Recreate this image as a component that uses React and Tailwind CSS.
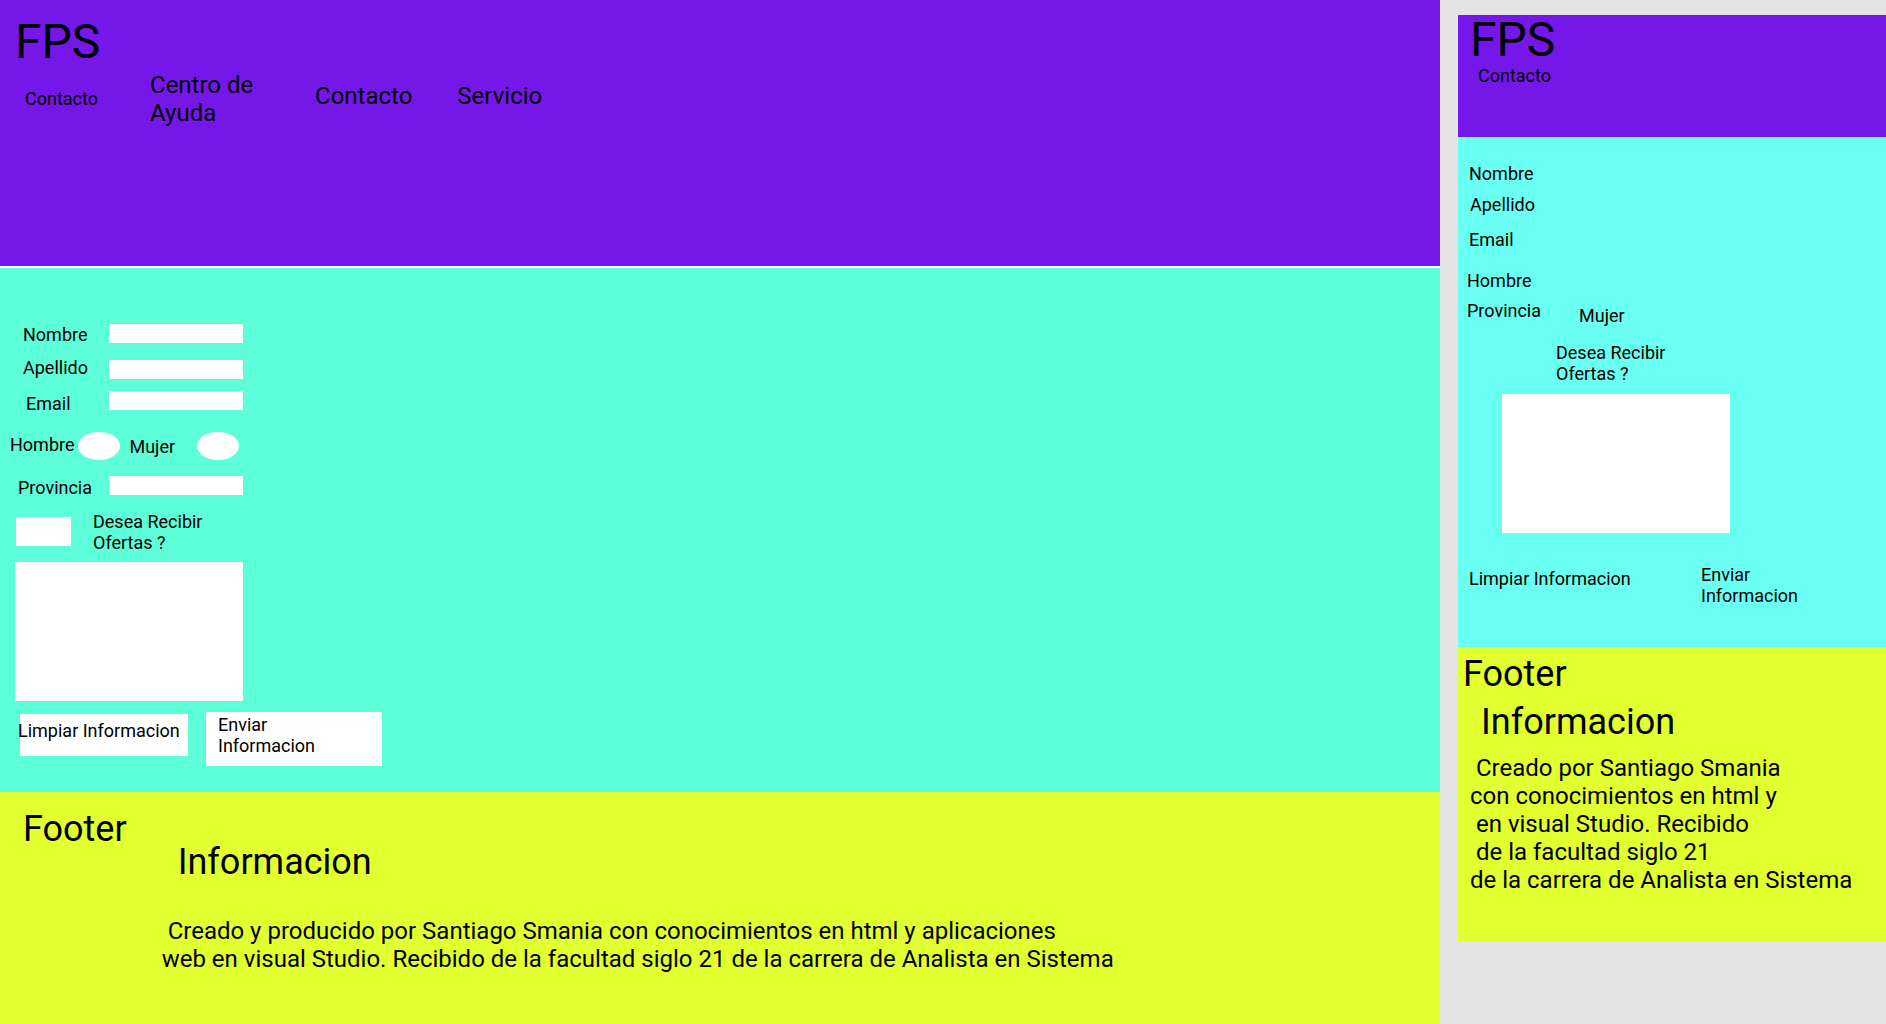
import React from "react";

const purple = "bg-[#7617ea]";

function DesktopView() {
  return (
    <div className="flex flex-col w-[1440px] h-[1024px] shrink-0">
      {/* Header */}
      <header className={`${purple} h-[268px] border-b-2 border-white`}>
        <h1 className="pt-[18px] pl-[15px] text-[48px] leading-none">FPS</h1>
        <nav className="mt-[5px] flex items-start pl-[25px]">
          <a className="mt-[17px] text-[18px] leading-[21px]">Contacto</a>
          <a className="ml-[52px] w-[120px] text-[24px] leading-[28px]">
            Centro de Ayuda
          </a>
          <a className="ml-[45px] mt-[11px] text-[24px] leading-[28px]">
            Contacto
          </a>
          <a className="ml-[45px] mt-[11px] text-[24px] leading-[28px]">
            Servicio
          </a>
        </nav>
      </header>

      {/* Form */}
      <section className="bg-[#5cffd8] h-[524px] pt-[56px] text-[18px] leading-[21px]">
        <div className="flex items-start pl-[23px]">
          <label className="w-[86px]">Nombre</label>
          <input className="w-[134px] h-[19px] bg-white" />
        </div>
        <div className="mt-[12px] flex items-start pl-[23px]">
          <label className="w-[86px]">Apellido</label>
          <input className="mt-[3px] w-[134px] h-[19px] bg-white" />
        </div>
        <div className="mt-[12px] flex items-start pl-[26px]">
          <label className="mt-[2px] w-[83px]">Email</label>
          <input className="w-[134px] h-[19px] bg-white" />
        </div>
        <div className="mt-[18px] flex items-start pl-[10px]">
          <span className="mt-[2px]">Hombre</span>
          <span className="ml-[4px] w-[42px] h-[28px] rounded-[50%] bg-white" />
          <span className="ml-[9px] mt-[4px]">Mujer</span>
          <span className="ml-[22px] w-[42px] h-[28px] rounded-[50%] bg-white" />
        </div>
        <div className="mt-[16px] flex items-start pl-[18px]">
          <label className="mt-[1px] w-[91px]">Provincia</label>
          <input className="w-[134px] h-[19px] bg-white" />
        </div>
        <div className="mt-[13px] flex items-start pl-[16px]">
          <span className="mt-[6px] w-[55px] h-[29px] bg-white" />
          <span className="ml-[22px]">
            Desea Recibir
            <br />
            Ofertas ?
          </span>
        </div>
        <textarea className="block mt-[9px] ml-[15px] w-[228px] h-[139px] bg-white resize-none" />
        <div className="mt-[11px] flex items-start pl-[20px]">
          <div className="mt-[2px] w-[168px] h-[42px] bg-white pt-[6px] whitespace-nowrap">
            <span className="-ml-[2px]">Limpiar Informacion</span>
          </div>
          <div className="ml-[18px] w-[176px] h-[54px] bg-white pl-[12px] pt-[2px]">
            Enviar
            <br />
            Informacion
          </div>
        </div>
      </section>

      {/* Footer */}
      <footer className="bg-[#e2ff2f] flex-1 flex items-start pt-[16px]">
        <h2 className="pl-[23px] text-[36px] leading-[42px]">Footer</h2>
        <div className="ml-[35px]">
          <h3 className="mt-[33px] pl-[16px] text-[36px] leading-[42px]">
            Informacion
          </h3>
          <div className="mt-[34px] text-[24px] leading-[28px] whitespace-pre">
            <p>{" Creado y producido por Santiago Smania con conocimientos en html y aplicaciones"}</p>
            <p>web en visual Studio. Recibido de la facultad siglo 21 de la carrera de Analista en Sistema</p>
          </div>
        </div>
      </footer>
    </div>
  );
}

function MobileView() {
  return (
    <div className="ml-[18px] mt-[15px] w-[440px] shrink-0 flex flex-col">
      <header className={`${purple} h-[122px] pl-[12px]`}>
        <h1 className="pt-[1px] text-[48px] leading-none">FPS</h1>
        <p className="mt-[1px] pl-[8px] text-[18px] leading-[21px]">Contacto</p>
      </header>

      <section className="bg-[#69fff2] h-[510px] pt-[26px] text-[18px] leading-[21px]">
        <p className="pl-[11px]">Nombre</p>
        <p className="mt-[10px] pl-[12px]">Apellido</p>
        <p className="mt-[14px] pl-[11px]">Email</p>
        <p className="mt-[20px] pl-[9px]">Hombre</p>
        <div className="mt-[9px] flex items-start pl-[9px]">
          <span className="w-[74px]">Provincia</span>
          <span className="ml-[38px] mt-[5px]">Mujer</span>
        </div>
        <p className="mt-[16px] pl-[98px]">
          Desea Recibir
          <br />
          Ofertas ?
        </p>
        <div className="mt-[10px] ml-[44px] w-[228px] h-[139px] bg-white" />
        <div className="mt-[31px] flex items-start pl-[11px]">
          <span className="mt-[4px] w-[161px] whitespace-nowrap">Limpiar Informacion</span>
          <span className="ml-[71px]">
            Enviar
            <br />
            Informacion
          </span>
        </div>
      </section>

      <footer className="bg-[#e2ff2f] h-[294px] pt-[6px]">
        <h2 className="pl-[5px] text-[36px] leading-[42px]">Footer</h2>
        <h3 className="mt-[6px] pl-[23px] text-[36px] leading-[42px]">Informacion</h3>
        <div className="mt-[11px] pl-[12px] text-[24px] leading-[28px] whitespace-pre">
          <p>{" Creado por Santiago Smania"}</p>
          <p>con conocimientos en html y</p>
          <p>{" en visual Studio. Recibido"}</p>
          <p>{" de la facultad siglo 21"}</p>
          <p>de la carrera de Analista en Sistema</p>
        </div>
      </footer>
    </div>
  );
}

export default function App() {
  return (
    <div className="w-[1886px] h-[1024px] overflow-hidden bg-[#e4e4e4] flex items-start font-[Roboto,sans-serif] text-black">
      <DesktopView />
      <MobileView />
    </div>
  );
}
